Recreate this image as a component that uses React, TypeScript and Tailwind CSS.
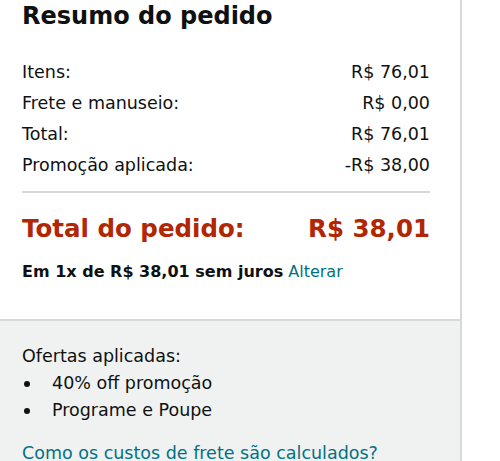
const rows = [
  { label: 'Itens:', value: 'R$ 76,01' },
  { label: 'Frete e manuseio:', value: 'R$ 0,00' },
  { label: 'Total:', value: 'R$ 76,01' },
  { label: 'Promoção aplicada:', value: '-R$ 38,00' },
];

const offers = ['40% off promoção', 'Programe e Poupe'];

const App = () => {
  return (
    <div className="min-h-screen bg-white font-['DejaVu_Sans',sans-serif] text-[#0F1111]">
      <div className="w-[462px] h-[461px] overflow-hidden border-r-2 border-[#D5D9D9] flex flex-col">
        <div className="px-[22px] pr-[30px] pb-[36px]">
          <h1 className="text-[24px] font-bold leading-[32px]">Resumo do pedido</h1>
          <div className="mt-[29px] flex flex-col gap-[9px] text-[17.5px] leading-[22px]">
            {rows.map((row) => (
              <div key={row.label} className="flex justify-between">
                <span>{row.label}</span>
                <span>{row.value}</span>
              </div>
            ))}
          </div>
          <div className="mt-[15px] h-[2px] bg-[#D5D9D9]" />
          <div className="mt-[20px] flex justify-between text-[24.5px] font-bold leading-[32px] text-[#B12704]">
            <span>Total do pedido:</span>
            <span>R$ 38,01</span>
          </div>
          <p className="mt-[16px] text-[16px] leading-[22px]">
            <span className="font-bold">Em 1x de R$ 38,01 sem juros</span>{' '}
            <a className="text-[#007185]">Alterar</a>
          </p>
        </div>
        <div className="flex-1 border-t-2 border-[#D5D9D9] bg-[#F0F2F2] px-[22px] pt-[22px] text-[17.5px] leading-[27px]">
          <p>Ofertas aplicadas:</p>
          <ul>
            {offers.map((offer) => (
              <li key={offer} className="flex items-center">
                <span className="ml-[2px] mr-[22px] h-[6px] w-[6px] rounded-full bg-[#0F1111]" />
                <span>{offer}</span>
              </li>
            ))}
          </ul>
          <a className="mt-[16px] block text-[#007185]">Como os custos de frete são calculados?</a>
        </div>
      </div>
    </div>
  );
};

export default App;
